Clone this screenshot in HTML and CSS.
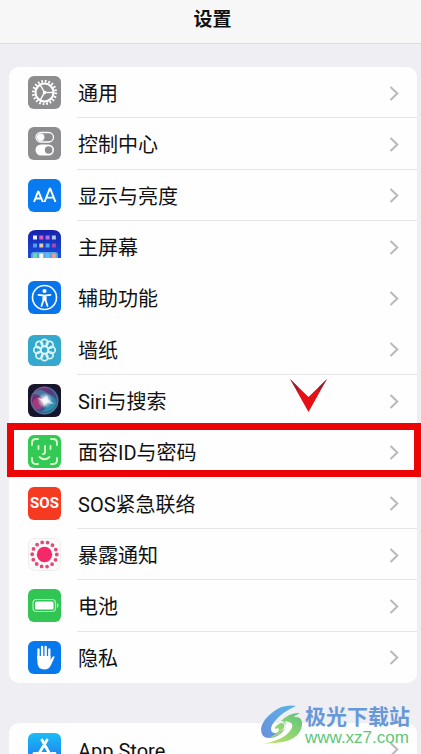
FILE: index.html
```html
<!DOCTYPE html>
<html lang="zh-CN">
<head>
<meta charset="utf-8">
<meta name="viewport" content="width=device-width, initial-scale=1">
<title>设置</title>
<link rel="stylesheet" href="styles.css">
</head>
<body>
<svg class="defs" width="0" height="0" aria-hidden="true">
  <defs>
    <symbol id="chevron" viewBox="0 0 10 16"><path d="M1.500 2 8.300 8.500 1.500 15" fill="none" stroke="#b9b9bd" stroke-width="2"/></symbol>
    <linearGradient id="store" x2="0" y2="1"><stop stop-color="#1cbcf6"/><stop offset="1" stop-color="#1b72ee"/></linearGradient>
    <linearGradient id="siri" x2="1" y2="1"><stop stop-color="#d52f76"/><stop offset=".45" stop-color="#6c4ba8"/><stop offset="1" stop-color="#1bb8cf"/></linearGradient>
    <radialGradient id="glow"><stop stop-color="#fff"/><stop offset=".3" stop-color="#fff" stop-opacity=".85"/><stop offset="1" stop-color="#bde" stop-opacity="0"/></radialGradient>
    <linearGradient id="home" x2="0" y2="1"><stop stop-color="#1622ae"/><stop offset="1" stop-color="#1a4fd8"/></linearGradient>
    <linearGradient id="swooshA" x1="0" y1="1" x2="1" y2="0"><stop stop-color="#6a8fdc"/><stop offset="1" stop-color="#57b5e6"/></linearGradient>
    <linearGradient id="swooshB" x1="0" y1="1" x2="1" y2="0"><stop stop-color="#cbe56a"/><stop offset="1" stop-color="#59c47b"/></linearGradient>
  </defs>
</svg>

<header class="bar"><h1 class="title">设置</h1></header>

<main class="content">
  <nav class="card" aria-label="系统设置">
    <a class="row" href="#general">
      <svg class="icon" viewBox="0 0 33 33"><rect width="33" height="33" rx="6" fill="#8d8d8f"/><g fill="none" stroke="#fff"><circle cx="16.500" cy="16.500" r="11.300" stroke-width="2.600" stroke-dasharray="1.700 1.850"/><circle cx="16.500" cy="16.500" r="9" stroke-width="2.200"/><path d="M16.500 16.500h9M16.500 16.500l-4.500-8M16.500 16.500l-4.500 8" stroke-width="1.500"/></g><circle cx="16.500" cy="16.500" r="1.800" fill="#fff"/></svg>
      <span class="label">通用</span><svg class="chevron"><use href="#chevron"/></svg>
    </a>
    <a class="row" href="#control">
      <svg class="icon" viewBox="0 0 33 33"><rect width="33" height="33" rx="6" fill="#8d8d8f"/><rect x="8" y="5.500" width="17.500" height="9.500" rx="4.750" fill="none" stroke="#fff" stroke-width="1.300"/><circle cx="12.700" cy="10.200" r="3.700" fill="#fff"/><rect x="7.500" y="17.500" width="18.500" height="11" rx="5.500" fill="#fff"/><circle cx="20.600" cy="23" r="3.800" fill="#8d8d8f"/></svg>
      <span class="label">控制中心</span><svg class="chevron"><use href="#chevron"/></svg>
    </a>
    <a class="row" href="#display">
      <svg class="icon" viewBox="0 0 33 33"><rect width="33" height="33" rx="6" fill="#087bf0"/><g fill="none" stroke="#fff" stroke-width="1.900"><path d="M6 23 10 12.800h.6L14.800 23M7.500 19.500h5.800M16.500 23 21.700 9.800h.6L27.500 23M18.400 18.600h7.300"/></g></svg>
      <span class="label">显示与亮度</span><svg class="chevron"><use href="#chevron"/></svg>
    </a>
    <a class="row plain" href="#home-screen">
      <svg class="icon" viewBox="0 0 33 33"><path d="M0 28V8Q0 0 8 0H25Q33 0 33 8V28Z" fill="url(#home)"/><path d="M3 28v-3q0-3 3-3h21q3 0 3 3v3z" fill="#58a5e7"/><g><path d="M5 5.500h4v4H5z" fill="#eef"/><path d="M11.300 5.500h4v4h-4z" fill="#df59b6"/><path d="M17.600 5.500h4v4h-4z" fill="#b46cf0"/><path d="M23.900 5.500h4v4h-4z" fill="#aac8df"/><path d="M5 13.500h4v4H5z" fill="#4c9eee"/><path d="M11.300 13.500h4v4h-4z" fill="#e8c79c"/><path d="M17.600 13.500h4v4h-4z" fill="#49a9f4"/><path d="M23.900 13.500h4v4h-4z" fill="#a34aaf"/><path d="M5 23.500h4V28H5z" fill="#70d6b0"/><path d="M11.300 23.500h4V28h-4z" fill="#f2f4ff"/><path d="M17.600 23.500h4V28h-4z" fill="#68bbff"/><path d="M23.900 23.500h4V28h-4z" fill="#ee9f8c"/></g></svg>
      <span class="label">主屏幕</span><svg class="chevron"><use href="#chevron"/></svg>
    </a>
    <a class="row plain" href="#accessibility">
      <svg class="icon" viewBox="0 0 33 33"><rect width="33" height="33" rx="6" fill="#0874ea"/><circle cx="16.500" cy="16.500" r="12" fill="none" stroke="#fff" stroke-width="1.600"/><circle cx="16.500" cy="10" r="2.100" fill="#fff"/><path d="M10.500 13.800 16.500 14.700l6-.9M16.500 14.500v4.500M15.300 15v4.500L13.500 25M17.700 15v4.500L19.500 25" fill="none" stroke="#fff" stroke-width="1.800" stroke-linecap="round" stroke-linejoin="round"/></svg>
      <span class="label">辅助功能</span><svg class="chevron"><use href="#chevron"/></svg>
    </a>
    <a class="row" href="#wallpaper">
      <svg class="icon" viewBox="0 0 33 33"><rect y="2" width="33" height="31" rx="6" fill="#34a9cd"/><g fill="none" stroke="#d9f4f5" stroke-width="1.700"><circle cx="16.500" cy="9.700" r="3.400"/><circle cx="21.700" cy="11.800" r="3.400"/><circle cx="23.800" cy="17" r="3.400"/><circle cx="21.700" cy="22.200" r="3.400"/><circle cx="16.500" cy="24.300" r="3.400"/><circle cx="11.300" cy="22.200" r="3.400"/><circle cx="9.200" cy="17" r="3.400"/><circle cx="11.300" cy="11.800" r="3.400"/><circle cx="16.500" cy="17" r="3.600"/></g></svg>
      <span class="label">墙纸</span><svg class="chevron"><use href="#chevron"/></svg>
    </a>
    <a class="row plain" href="#siri-search">
      <svg class="icon" viewBox="0 0 33 33"><rect width="33" height="33" rx="6" fill="#17152b"/><circle cx="16.500" cy="16.500" r="14" fill="url(#siri)" opacity=".7"/><path d="M5 10q7-8 15 0 8 2 8 10-5 9-15 8 8-4 3-12Q12 10 5 10Z" fill="#2bb8c8" opacity=".5"/><path d="M4 20q3-10 13-4-2 9-8 10Q5 25 4 20Z" fill="#ed3977" opacity=".5"/><circle cx="16.500" cy="16.500" r="13.300" fill="none" stroke="#4f8fa5" stroke-width=".8"/><circle cx="17" cy="16.500" r="8" fill="url(#glow)"/><path d="m9 14 6 1 4-4 1 4 6 5-7-1-3 4-1-5Z" fill="#fff" opacity=".6"/></svg>
      <span class="label">Siri与搜索</span><svg class="chevron"><use href="#chevron"/></svg>
    </a>
    <a class="row plain marked" href="#face-id">
      <svg class="icon" viewBox="0 0 33 33"><rect width="33" height="33" rx="6" fill="#32c954"/><g fill="none" stroke="#dfffcf" stroke-width="1.800" stroke-linecap="round"><path d="M4 10V8q0-4 4-4h2M23 4h2q4 0 4 4v2M29 23v2q0 4-4 4h-2M10 29H8q-4 0-4-4v-2M10.500 11v3M22.500 11v3M17 11v6q0 2-2 2M11.500 22q5 4.500 10 0"/></g></svg>
      <span class="label">面容ID与密码</span><svg class="chevron"><use href="#chevron"/></svg>
    </a>
    <a class="row" href="#sos">
      <span class="icon sos" aria-hidden="true">SOS</span>
      <span class="label">SOS紧急联络</span><svg class="chevron"><use href="#chevron"/></svg>
    </a>
    <a class="row" href="#exposure">
      <svg class="icon" viewBox="0 0 33 33"><rect x=".5" y=".5" width="32" height="32" rx="6" fill="#fafafa" stroke="#eee"/><circle cx="16.500" cy="16.500" r="7.700" fill="#f52967"/><circle cx="16.500" cy="16.500" r="12.300" fill="none" stroke="#e34878" stroke-width="3.800" stroke-linecap="round" stroke-dasharray="0 5.520"/></svg>
      <span class="label">暴露通知</span><svg class="chevron"><use href="#chevron"/></svg>
    </a>
    <a class="row" href="#battery">
      <svg class="icon" viewBox="0 0 33 33"><rect width="33" height="33" rx="6" fill="#31c653"/><rect x="5" y="10.500" width="22.500" height="12" rx="3.500" fill="none" stroke="#b7efbd" stroke-width="1.200"/><rect x="7" y="12.500" width="18.500" height="8" rx="1.500" fill="#fff"/><path d="M29 14v5q1.500-.7 1.500-2.500T29 14Z" fill="#b7efbd"/></svg>
      <span class="label">电池</span><svg class="chevron"><use href="#chevron"/></svg>
    </a>
    <a class="row" href="#privacy">
      <svg class="icon" viewBox="0 0 33 33"><rect width="33" height="33" rx="6" fill="#0879ed"/><g fill="none" stroke="#fff" stroke-width="2.300" stroke-linecap="round"><path d="M10.500 18V8.500M14.100 17V6M17.700 17V6M21.300 18V8.500"/></g><path d="M9.350 15h13.100v4l2-3q1.200-1.300 2.300-.2L23 24q-2 4.500-6.500 4.500-7.150 0-7.150-8Z" fill="#fff"/></svg>
      <span class="label">隐私</span><svg class="chevron"><use href="#chevron"/></svg>
    </a>
    <svg class="pointer" viewBox="0 0 38 34" aria-hidden="true"><path d="M0 0 18.500 18 37 0 18.500 33Z" fill="#e60f16"/><path d="M0 0 8 8l1 6ZM37 0l-8 8-1 6Z" fill="#8c2530"/></svg>
  </nav>

  <nav class="card store" aria-label="应用">
    <a class="row" href="#app-store">
      <svg class="icon" viewBox="0 0 33 33"><rect width="33" height="33" rx="6" fill="url(#store)"/><g fill="none" stroke="#fff" stroke-width="2.800" stroke-linecap="round"><path d="m14 7 9.500 17M19 7l-8 13.500M6 20.500h13M24 20.500h3M9 24.500l-.5 1"/></g></svg>
      <span class="label">App Store</span><svg class="chevron"><use href="#chevron"/></svg>
    </a>
  </nav>
</main>

<aside class="watermark">
  <svg class="mark" viewBox="0 0 42 42" aria-hidden="true"><path d="M35 1Q22-1 12 7 1 15 0 24q0 9 8 9 9 0 16-9-9 6-13 3-3-4 3-11Q21 7 35 1Z" fill="url(#swooshA)"/><path d="M14 22q6-6 9-3 2 3-4 8 6-3 6-7 0-4-5-4Q29 7 39 8q-6 3-6 4 9-1 8 8Q39 36 14 38q-7 0-12 1 15-3 23-9 8-7 6-11-3-4-9-2 5 3 1 8-5 6-15 8 8-4 10-8 0-3-4-1Z" fill="url(#swooshB)"/></svg>
  <div class="site"><strong class="site-name">极光下载站</strong><span class="site-url">www.xz7.com</span></div>
</aside>
</body>
</html>
```
FILE: styles.css
```css
* { box-sizing: border-box; }

body {
  margin: 0;
  height: 100vh;
  overflow: hidden;
  position: relative;
  background: #efeef3;
  color: #111;
  font-family: Roboto, "Noto Sans CJK SC", sans-serif;
}

.defs { position: absolute; }

.bar {
  height: 44px;
  padding: 0 0 4px 4px;
  display: flex;
  align-items: center;
  justify-content: center;
  background: #f7f7f7;
  border-bottom: 1px solid #dcdce0;
}

.title { margin: 0; font-size: 19px; line-height: 28px; font-weight: 700; }

.content { padding: 23px 4px 0 9px; }

.card {
  position: relative;
  display: grid;
  grid-auto-rows: 1fr;
  min-height: 616px;
  background: #fefefe;
  border-radius: 10px;
}

.store { margin-top: 40px; min-height: 52px; }

.row {
  position: relative;
  display: flex;
  align-items: center;
  padding: 0 18px 0 19px;
  color: inherit;
  text-decoration: none;
}

.row::after {
  content: "";
  position: absolute;
  left: 68px;
  right: 0;
  bottom: 0;
  height: 1px;
  background: #e6e6e8;
}

.row:last-of-type::after, .plain::after { display: none; }

.icon { width: 33px; height: 33px; flex: none; }

.label { flex: 1; margin-left: 17px; font-size: 20px; line-height: 28px; padding-top: 3px; }

.chevron { width: 10px; height: 16px; flex: none; }

.sos {
  display: flex;
  align-items: center;
  justify-content: center;
  border-radius: 6px;
  background: #f63a22;
  color: #fff;
  font-size: 15px;
  font-weight: 700;
}

.marked::before {
  content: "";
  position: absolute;
  inset: -3px -4px 1px -2px;
  border: 7px solid #ed0505;
}

.pointer { position: absolute; left: 281px; top: 312px; width: 38px; height: 34px; }

.watermark {
  position: absolute;
  right: 11px;
  bottom: 7px;
  display: flex;
  align-items: center;
}

.mark { width: 42px; height: 42px; }

.site { display: flex; flex-direction: column; margin-left: 2px; }

.site-name { color: #6798d8; font-size: 21px; line-height: 24px; }

.site-url { color: #60c779; font-family: "Liberation Sans", sans-serif; font-size: 17px; line-height: 18px; }
```
